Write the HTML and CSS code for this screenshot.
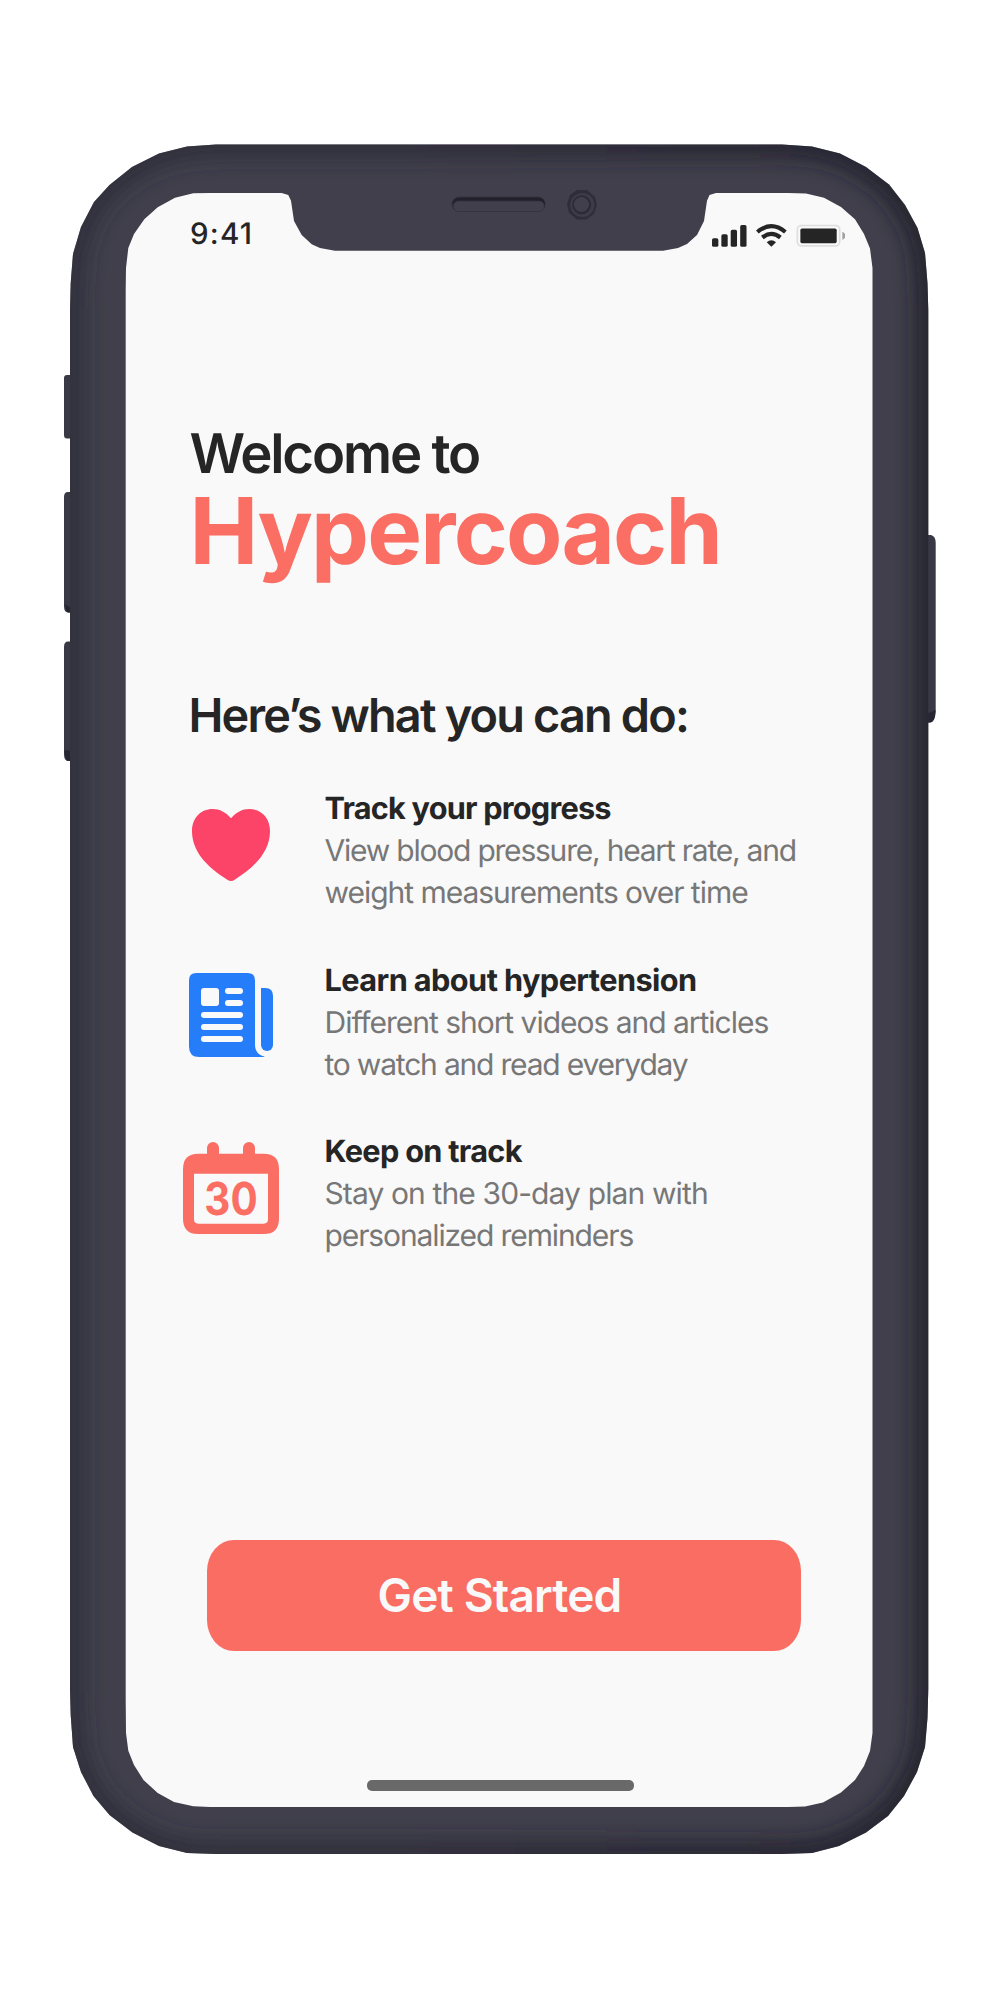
FILE: index.html
```html
<!DOCTYPE html>
<html lang="en">
<head>
<meta charset="utf-8">
<title>Hypercoach</title>
<link rel="stylesheet" href="styles.css">
</head>
<body>
<div class="phone">
  <svg class="frame" viewBox="0 0 1000 2000" aria-hidden="true">
    <defs>
      <path id="body" d="M216 144.5H782L812 146.5L840 153.5L866 167L889 184.5L905 205L917.5 228L925 253L927.5 283L928.3 310V1689L927.5 1718L925 1747L917 1772L904 1796L888 1816L866 1832.5L839 1846L812 1853L782 1854H216L187 1853L159 1846L132.500 1832.500L109.500 1815L93.500 1796L81 1772L73 1747L70.700 1715L70 1689V310L70.700 283L73 254L81 227L94 202L109.500 185L132 167L159 153.500L187 146.500Z"/>
      <clipPath id="bodyClip"><use href="#body"/></clipPath>
      <filter id="soft" x="-10%" y="-10%" width="120%" height="120%"><feGaussianBlur stdDeviation="11"/></filter>
      <linearGradient id="edge" x1="0" x2="1" y1="0" y2="0">
        <stop offset="0" stop-color="#2c2b38"/><stop offset=".5" stop-color="#292834"/><stop offset="1" stop-color="#1b1a27"/>
      </linearGradient>
    </defs>
    <g fill="#393845">
      <path d="M71 375H67Q64 375 64 378V435Q64 438.500 67 438.500H71Z"/>
      <path d="M71 492H68Q64 492 64 497V606Q64 612.500 68 612.500H71Z"/>
      <path d="M71 641.500H68Q64 641.500 64 647V754Q64 761 68 761H71Z"/>
      <path d="M927 535H931Q935.700 536 935.700 543V712Q935 722.500 930 722.500H927Z"/>
    </g>
    <path d="M64.500 750Q65 761 68 761H71V751ZM65 604Q66 612.500 68 612.500H71V608ZM935.500 710Q935 722.500 930 722.500H927V714Z" fill="#262532"/>
    <use href="#body" fill="#403f4b"/>
    <g clip-path="url(#bodyClip)">
      <use href="#body" fill="none" stroke="url(#edge)" stroke-width="20" filter="url(#soft)"/>
    </g>
    <path fill="#f9f9f9" d="M210 193H281.700L288.300 195L291 200.700L294 221L301.700 235L311.700 244.300L320 248L335 250.700H663L678 248L687 244L697 235L704 221L707 200.700L709.500 195L716 193H788L806 193.500L824 197.700L841 207L855 219.300L864 234L870 248.500L872.500 268V1733L870 1751L864 1766L855 1780L841 1792.500L823 1802.500L805 1806.500L788 1807H210L193.300 1806.300L174 1802L157.700 1793L143.500 1780L134 1765L128.300 1750.700L126 1733L125.700 1700V290L126 268L128.300 248L134 234L144.300 219.300L157.700 207.300L175 197.700L193.300 193.300Z"/>
    <rect x="451.500" y="196.500" width="94" height="15" rx="7.500" fill="#34333f"/>
    <rect x="452.500" y="197.500" width="92.500" height="13.500" rx="6.500" fill="#21202b"/>
    <rect x="453.300" y="201" width="91" height="10.500" rx="5.200" fill="#403f4b" stroke="#34333f" stroke-width=".8"/>
    <path d="M577 190H587L595 197L597 205L594 214L586 219.500H577L569 213L567 204L570 195Z" fill="#2e2d39"/>
    <circle cx="582.300" cy="205" r="12" fill="#3d3c48"/>
    <circle cx="581.700" cy="204.700" r="9.500" fill="#2b2a35"/>
    <circle cx="581.500" cy="204.500" r="7.600" fill="#403f4b"/>
  </svg>

  <main class="screen">
    <header class="status">
      <span class="time">9:41</span>
      <svg class="status-icons" viewBox="95 282 400 69" aria-hidden="true">
        <g fill="#252525">
          <rect x="95" y="325" width="19" height="25.500" rx="5"/>
          <rect x="123" y="313" width="19" height="37.500" rx="5"/>
          <rect x="151" y="299.500" width="19" height="51" rx="5"/>
          <rect x="179.500" y="285" width="19" height="65.500" rx="5"/>
          <path d="M259 337Q273 325 287 337L273 350Z"/>
          <rect x="360" y="295.500" width="109" height="44" rx="5"/>
        </g>
        <g fill="none" stroke="#252525" stroke-width="12.500">
          <path d="M231 306Q273 271 315 306"/>
          <path d="M246 322.500Q273 301 300 322.500"/>
        </g>
        <rect x="351" y="286.500" width="127" height="61" rx="12" fill="none" stroke="#dedddf" stroke-width="5"/>
        <path d="M486 305Q495 309 495 317.500Q495 326 486 330Z" fill="#a0a0a0"/>
      </svg>
    </header>

    <h1 class="welcome"><span class="greeting">Welcome to</span><span class="brand">Hypercoach</span></h1>

    <h2 class="intro">Here’s what you can do:</h2>

    <ul class="features">
      <li class="feature">
        <span class="icon">
          <svg width="78" height="72" viewBox="66 87 234 216" aria-hidden="true"><path fill="#fb4467" d="M183 115C168 97 149 87 128 87C92 87 66 114 66 153C66 211 106 258 172 299Q183 307 194 299C260 258 300 211 300 153C300 114 274 87 238 87C217 87 198 97 183 115Z"/></svg>
        </span>
        <div>
          <h3 class="title t-track">Track your progress</h3>
          <p class="text"><span class="line l-view">View blood pressure, heart rate, and</span> <span class="line l-weight">weight measurements over time</span></p>
        </div>
      </li>
      <li class="feature">
        <span class="icon icon-news">
          <svg width="84" height="84" viewBox="57 579 252 252" aria-hidden="true">
            <path fill="#267dfa" d="M79 579H233Q255 579 255 601V795C255 814 268 828 284 829Q283 831 278 831H88Q57 831 57 800V601Q57 579 79 579Z"/>
            <path fill="#267dfa" d="M273 624H286Q309 624 309 647V795A18 18 0 0 1 273 795Z"/>
            <g fill="#f9f9f9">
              <rect x="93" y="624" width="54" height="54" rx="9"/>
              <rect x="165" y="624" width="54" height="18" rx="9"/>
              <rect x="165" y="660" width="54" height="18" rx="9"/>
              <rect x="93" y="696" width="126" height="18" rx="9"/>
              <rect x="93" y="732" width="126" height="18" rx="9"/>
              <rect x="93" y="768" width="126" height="18" rx="9"/>
            </g>
          </svg>
        </span>
        <div>
          <h3 class="title t-learn">Learn about hypertension</h3>
          <p class="text"><span class="line l-videos">Different short videos and articles</span> <span class="line l-watch">to watch and read everyday</span></p>
        </div>
      </li>
      <li class="feature">
        <span class="icon">
          <svg width="96" height="92" viewBox="39 1087 288 276" aria-hidden="true">
            <path fill="#fb6e64" fill-rule="evenodd" d="M111 1122V1105A18 18 0 0 1 147 1105V1122H219V1105A18 18 0 0 1 255 1105V1122H281Q327 1122 327 1168V1317Q327 1363 281 1363H85Q39 1363 39 1317V1168Q39 1122 85 1122ZM72 1182V1319Q72 1332 85 1332H281Q294 1332 294 1319V1182Z"/>
            <text class="day" x="103" y="1304.500" textLength="160" lengthAdjust="spacingAndGlyphs">30</text>
          </svg>
        </span>
        <div>
          <h3 class="title t-keep">Keep on track</h3>
          <p class="text"><span class="line l-stay">Stay on the 30-day plan with</span> <span class="line l-personal">personalized reminders</span></p>
        </div>
      </li>
    </ul>

    <button class="start" type="button">Get Started</button>
    <div class="home-bar"></div>
  </main>
</div>
</body>
</html>
```
FILE: styles.css
```css
* { box-sizing: border-box; }
body {
  margin: 0;
  background: #fff;
  color: #252525;
  font-family: Inter, "Liberation Sans", sans-serif;
  text-rendering: geometricPrecision;
}
h1, h2, h3, p, ul { margin: 0; padding: 0; font-weight: inherit; }

.phone { position: relative; width: 1000px; height: 2000px; padding: 193px 127px 193px 126px; }
.frame { position: absolute; inset: 0; width: 1000px; height: 2000px; }

.screen { position: relative; display: flex; flex-direction: column; height: 1614px; }

.status {
  display: flex;
  justify-content: space-between;
  align-items: flex-start;
  padding: 22.5px 28px 0 64px;
  height: 60px;
}
.time { font-size: 29.500px; line-height: 36px; font-weight: 550; letter-spacing: 1.200px; }
.status-icons { width: 133.4px; height: 23px; margin-top: 8.500px; }

.welcome { display: flex; flex-direction: column; margin: 168px 0 0 63.500px; white-space: nowrap; }
.greeting { font-size: 54.500px; line-height: 67px; font-weight: 600; letter-spacing: -2.160px; }
.brand { font-size: 92px; line-height: 88px; font-weight: 700; letter-spacing: -1.790px; color: #fb6e64; }

.intro {
  margin: 112px 0 0 62.500px;
  font-size: 46.800px;
  line-height: 56px;
  font-weight: 600;
  letter-spacing: -1.800px;
  white-space: nowrap;
}

.features { display: flex; flex-direction: column; gap: 45.500px; margin: 44px 0 0 57px; list-style: none; }
.feature { display: grid; grid-template-columns: 96px 1fr; column-gap: 45.500px; height: 126px; }
.icon { display: flex; align-items: center; justify-content: center; padding-bottom: 12.500px; }
.icon-news { padding-bottom: 14.500px; }
.title { font-size: 30.700px; line-height: 42px; font-weight: 700; white-space: nowrap; }
.text { font-size: 30px; line-height: 42px; font-weight: 400; color: #777; white-space: nowrap; }
.line { display: block; }
.day { font-size: 136px; font-weight: 700; fill: #fb6e64; }

.t-track { letter-spacing: -.780px; }
.t-learn { letter-spacing: -.580px; }
.t-keep { letter-spacing: -.680px; }
.l-view { letter-spacing: -1.220px; }
.l-weight { letter-spacing: -1.030px; }
.l-videos { letter-spacing: -1.020px; }
.l-watch { letter-spacing: -1.200px; }
.l-stay { letter-spacing: -.880px; }
.l-personal { letter-spacing: -1.110px; }

.start {
  width: 594px;
  height: 111px;
  margin: 282.900px 0 0 81px;
  padding: 0 9px 0 0;
  border: 0;
  border-radius: 27px / 31px;
  background: #fa6d63;
  color: #f9f9f9;
  font: 600 46px/56px Inter, "Liberation Sans", sans-serif;
  letter-spacing: -.840px;
}
.home-bar { width: 267px; height: 10.500px; margin: 129.500px 0 0 240.500px; border-radius: 5px; background: #696969; }
```
